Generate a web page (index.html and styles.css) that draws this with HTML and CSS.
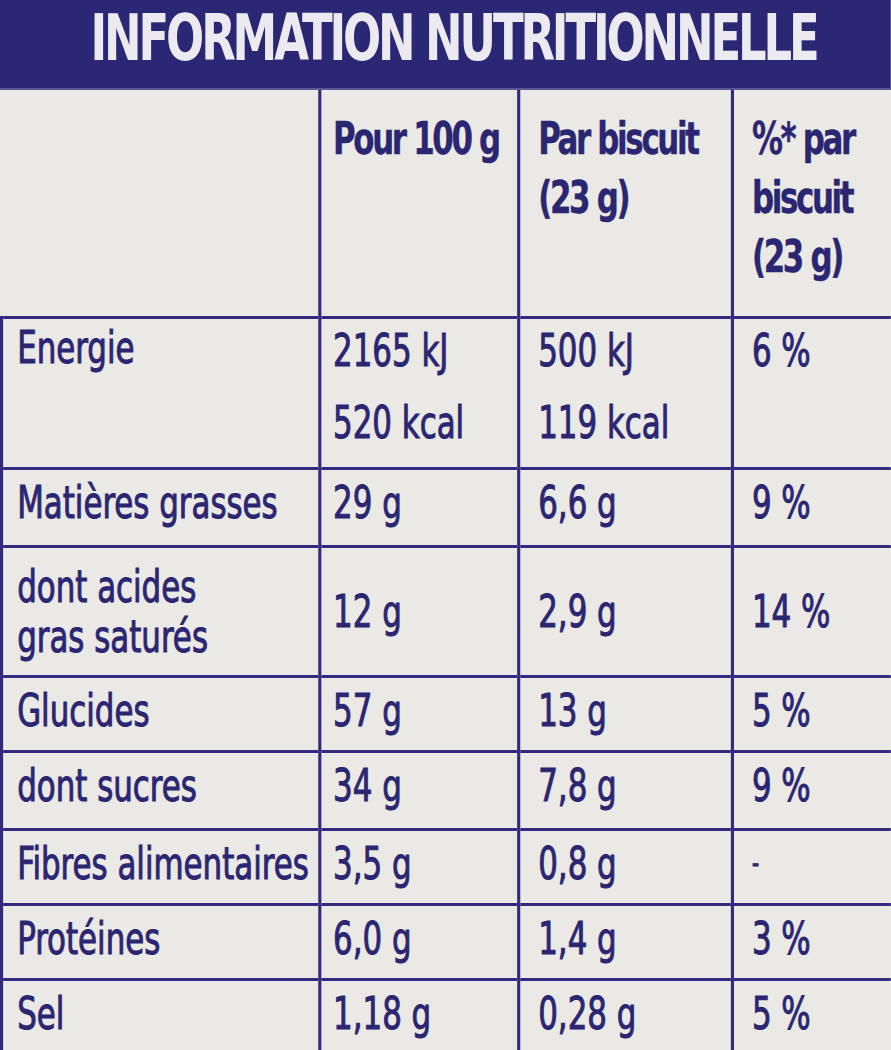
FILE: index.html
```html
<!DOCTYPE html>
<html lang="fr">
  <head>
    <meta charset="utf-8" />
    <meta name="viewport" content="width=device-width, initial-scale=1" />
    <title>Information nutritionnelle</title>
    <link rel="stylesheet" href="styles.css">
  </head>
  <body>
    <div class="sheet">
      <div class="label">
        <h1 class="title">INFORMATION NUTRITIONNELLE</h1>

        <table class="facts">
          <colgroup>
            <col class="c-name" />
            <col class="c-100" />
            <col class="c-unit" />
            <col class="c-pct" />
          </colgroup>
          <thead>
            <tr class="head">
              <th></th>
              <th>Pour 100 g</th>
              <th>Par biscuit<br />(23 g)</th>
              <th>%* par<br />biscuit<br />(23 g)</th>
            </tr>
          </thead>
          <tbody>
            <tr class="energy">
              <td>Energie</td>
              <td><div class="line">2165 kJ</div><div class="line">520 kcal</div></td>
              <td><div class="line">500 kJ</div><div class="line">119 kcal</div></td>
              <td><div class="line">6 %</div></td>
            </tr>
            <tr class="r78">
              <td>Matières grasses</td>
              <td>29 g</td>
              <td>6,6 g</td>
              <td>9 %</td>
            </tr>
            <tr class="r130">
              <td class="two">dont acides<br />gras saturés</td>
              <td>12 g</td>
              <td>2,9 g</td>
              <td>14 %</td>
            </tr>
            <tr class="r75">
              <td>Glucides</td>
              <td>57 g</td>
              <td>13 g</td>
              <td>5 %</td>
            </tr>
            <tr class="r78">
              <td>dont sucres</td>
              <td>34 g</td>
              <td>7,8 g</td>
              <td>9 %</td>
            </tr>
            <tr class="r75">
              <td>Fibres alimentaires</td>
              <td>3,5 g</td>
              <td>0,8 g</td>
              <td class="dash">-</td>
            </tr>
            <tr class="r75">
              <td>Protéines</td>
              <td>6,0 g</td>
              <td>1,4 g</td>
              <td>3 %</td>
            </tr>
            <tr class="r75">
              <td>Sel</td>
              <td>1,18 g</td>
              <td>0,28 g</td>
              <td>5 %</td>
            </tr>
          </tbody>
        </table>
      </div>
    </div>
  </body>
</html>
```

FILE: styles.css
```css
html,
body {
  margin: 0;
  background: #ebe9e5;
  overflow: hidden;
}

.sheet {
  width: 891px;
  height: 1050px;
  overflow: hidden;
}

/* the print face is a very narrow one, so the whole label is squeezed */
.label {
  width: 1142px;
  transform: scaleX(0.78);
  transform-origin: 0 0;
  font-family: "DejaVu Sans Condensed", "DejaVu Sans", sans-serif;
  color: #2b2672;
}

.title {
  margin: 0;
  height: 90px;
  padding: 3px 0 0 116px;
  box-sizing: border-box;
  background: #2a2874;
  border-bottom: 2px solid #5b5896;
  color: #eceaf0;
  font-size: 64px;
  font-weight: bold;
  line-height: 70px;
  letter-spacing: -4px;
  white-space: nowrap;
}

.facts {
  width: 100%;
  table-layout: fixed;
  border-collapse: collapse;
  font-size: 44px;
  -webkit-text-stroke: 1px #2b2672;
}

.c-name {
  width: 408px;
}

.c-100 {
  width: 255px;
}

.c-unit {
  width: 274px;
}

.facts th,
.facts td {
  border: 3px solid #33297f;
  border-left-width: 4px;
  border-right-width: 4px;
  padding: 8px 0 0 18px;
  text-align: left;
  vertical-align: top;
  line-height: 50px;
  white-space: nowrap;
}

.facts tr > :nth-child(2) {
  padding-left: 15px;
}

.facts tr > :nth-child(3),
.facts tr > :nth-child(4) {
  padding-left: 23px;
}

.facts tr > :last-child {
  border-right: none;
}

.facts th:first-child {
  border-left: none;
}

.head th {
  border-top: none;
  height: 207px;
  padding-top: 19px;
  font-weight: bold;
  letter-spacing: -3px;
  line-height: 59px;
  -webkit-text-stroke: 0.4px #2b2672;
}

.energy td {
  height: 144px;
  padding-top: 4px;
}

.energy .line {
  height: 72px;
  line-height: 56px;
}

.r78 td {
  height: 67px;
}

.r75 td {
  height: 64px;
}

.r130 td {
  height: 127px;
  padding-top: 0;
  vertical-align: middle;
}

.two {
  line-height: 57px;
}

.dash {
  font-size: 28px;
}
```
